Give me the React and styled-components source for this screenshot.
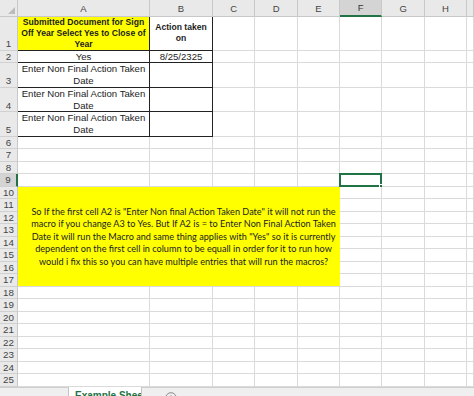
import React from "react";
import styled, { createGlobalStyle } from "styled-components";

const Global = createGlobalStyle`
  html, body { margin: 0; padding: 0; background: #fff; }
  body { width: 474px; height: 396px; overflow: hidden; font-family: "Liberation Sans", Arial, sans-serif; }
`;

const Page = styled.div`
  width: 474px;
  height: 396px;
  display: flex;
  flex-direction: column;
  overflow: hidden;
`;

const Sheet = styled.div`
  display: grid;
  grid-template-columns: 18px 132px 63px 42.4px 42.4px 42.3px 42.4px 42.3px 42.3px 1fr;
  grid-template-rows: 16.7px 34.3px 12.5px 24.5px 24.5px 24.5px repeat(20, 12.5px);
  flex: none;
`;

const Corner = styled.div`
  background: #e9e9e9;
  border-right: 1px solid #c8c8c8;
  border-bottom: 1px solid #c8c8c8;
  box-sizing: border-box;
  display: flex;
  align-items: flex-end;
  justify-content: flex-end;
  padding: 0 2px 2px 0;
`;

const Tri = styled.div`
  width: 0;
  height: 0;
  border-left: 7px solid transparent;
  border-bottom: 7px solid #bcbcbc;
`;

const ColHead = styled.div`
  background: ${(p) => (p.$sel ? "#d4d4d4" : "#e9e9e9")};
  border-right: 1px solid #c8c8c8;
  border-bottom: ${(p) => (p.$sel ? "2px solid #217346" : "1px solid #c8c8c8")};
  box-sizing: border-box;
  display: flex;
  align-items: center;
  justify-content: center;
  font-size: 9.5px;
  color: ${(p) => (p.$sel ? "#333" : "#444")};
  padding-top: 1px;
`;

const RowHead = styled.div`
  background: ${(p) => (p.$sel ? "#d4d4d4" : "#e9e9e9")};
  border-right: ${(p) => (p.$sel ? "2px solid #217346" : "1px solid #c8c8c8")};
  border-bottom: 1px solid #d0d0d0;
  box-sizing: border-box;
  display: flex;
  align-items: flex-end;
  justify-content: center;
  font-size: 9.8px;
  line-height: 11.5px;
  color: #444;
`;

const Cell = styled.div`
  box-sizing: border-box;
  position: relative;
  background: ${(p) => p.$bg || "#fff"};
  border-right: 1px solid ${(p) => (p.$boxed ? "#222" : "#dadada")};
  border-bottom: 1px solid ${(p) => (p.$boxed ? "#222" : "#dadada")};
  display: flex;
  flex-direction: column;
  align-items: center;
  justify-content: center;
  text-align: center;
  font-family: "Liberation Sans", Arial, sans-serif;
  font-size: ${(p) => (p.$bold ? "8.6px" : "9.6px")};
  font-weight: ${(p) => (p.$bold ? 700 : 400)};
  line-height: ${(p) => (p.$bold ? "11.2px" : "12px")};
  color: #1c1c1c;
  white-space: nowrap;
  ${(p) =>
    p.$sel &&
    `
    &::before {
      content: "";
      position: absolute;
      left: -1px; top: -1px; right: -1px; bottom: -1px;
      border: 2px solid #217346;
    }
    &::after {
      content: "";
      position: absolute;
      right: -3px; bottom: -3px;
      width: 5px; height: 5px;
      background: #217346;
      border: 1px solid #fff;
      box-sizing: border-box;
    }
  `}
`;

const Note = styled.div`
  grid-column: 2 / span 5;
  grid-row: 11 / span 8;
  background: #ffff00;
  border-bottom: 1px solid #dadada;
  box-sizing: border-box;
  display: flex;
  flex-direction: column;
  align-items: center;
  justify-content: center;
  padding-left: 9px;
  padding-top: 1px;
  text-align: center;
  font-family: Lato, "Open Sans", sans-serif;
  font-size: 9.15px;
  line-height: 12.5px;
  color: #222;
`;

const Line = styled.span`
  display: block;
  white-space: nowrap;
`;

const TabBar = styled.div`
  flex: 1;
  background: #efefef;
  border-top: 1px solid #cfcfcf;
  display: flex;
  align-items: flex-start;
  padding-left: 68px;
  gap: 23px;
`;

const Tab = styled.div`
  width: 74px;
  height: 20px;
  margin-top: -1px;
  background: #fff;
  border-left: 1px solid #c4c4c4;
  border-right: 1px solid #c4c4c4;
  box-sizing: border-box;
  font-family: "Liberation Sans", Arial, sans-serif;
  font-weight: 700;
  font-size: 10px;
  color: #217346;
  padding: 3px 0 0 6px;
  white-space: nowrap;
  overflow: hidden;
`;

const AddIcon = styled.svg`
  width: 12px;
  height: 12px;
  margin-top: 4px;
  flex: none;
`;

const cols = ["A", "B", "C", "D", "E", "F", "G", "H", "I"];

const content = {
  "1-0": { lines: ["Submitted Document for Sign", "Off Year Select Yes to Close of", "Year"], bold: true, bg: "#ffff00" },
  "1-1": { lines: ["Action taken", "on"], bold: true },
  "2-0": { lines: ["Yes"] },
  "2-1": { lines: ["8/25/2325"] },
  "3-0": { lines: ["Enter Non Final Action Taken", "Date"] },
  "4-0": { lines: ["Enter Non Final Action Taken", "Date"] },
  "5-0": { lines: ["Enter Non Final Action Taken", "Date"] },
};

const noteLines = [
  'So If the first cell A2 is "Enter Non final Action Taken Date" it will not run the',
  "macro if you change A3 to Yes. But If A2 is = to Enter Non Final Action Taken",
  'Date it will run the Macro and same thing applies with "Yes" so it is currently',
  "dependent on the first cell in column to be equall in order for it to run how",
  "would i fix this so you can have multiple entries that will run the macros?",
];

export default function App() {
  const cells = [];
  cells.push(
    <Corner key="corner">
      <Tri />
    </Corner>
  );
  cols.forEach((c, i) =>
    cells.push(
      <ColHead key={"h" + c} $sel={c === "F"}>
        {i < 8 ? c : ""}
      </ColHead>
    )
  );
  for (let r = 1; r <= 25; r++) {
    cells.push(
      <RowHead key={"r" + r} $sel={r === 9}>
        {r}
      </RowHead>
    );
    if (r === 10)
      cells.push(
        <Note key="note">
          {noteLines.map((l, i) => (
            <Line key={i}>{l}</Line>
          ))}
        </Note>
      );
    for (let c = 0; c < cols.length; c++) {
      if (r >= 10 && r <= 17 && c <= 4) continue;
      const info = content[`${r}-${c}`];
      const boxed = r <= 5 && c <= 1;
      cells.push(
        <Cell
          key={`${r}-${c}`}
          $boxed={boxed}
          $bold={info && info.bold}
          $bg={info && info.bg}
          $sel={r === 9 && c === 5}
        >
          {info && info.lines.map((l, i) => <Line key={i}>{l}</Line>)}
        </Cell>
      );
    }
  }
  return (
    <>
      <Global />
      <Page>
        <Sheet>{cells}</Sheet>
        <TabBar>
          <Tab>Example Sheet</Tab>
          <AddIcon viewBox="0 0 12 12">
            <circle cx="6" cy="6" r="5.3" fill="none" stroke="#8a8a8a" strokeWidth="1" />
            <path d="M6 3.2v5.6M3.2 6h5.6" stroke="#8a8a8a" strokeWidth="1" />
          </AddIcon>
        </TabBar>
      </Page>
    </>
  );
}
